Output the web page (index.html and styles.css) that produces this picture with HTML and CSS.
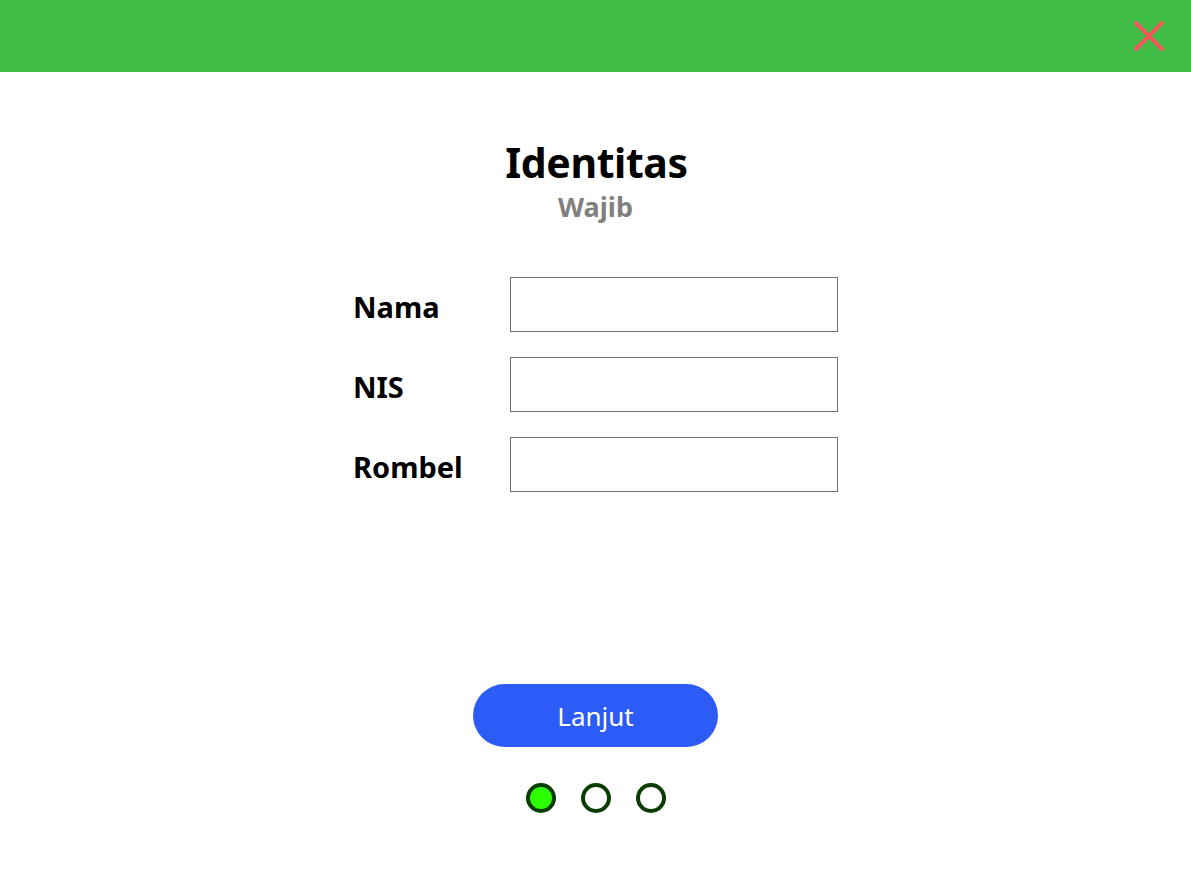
FILE: index.html
```html
<!DOCTYPE html>
<html lang="id">
<head>
<meta charset="utf-8">
<title>Identitas</title>
<link rel="stylesheet" href="styles.css">
</head>
<body>
<header class="topbar">
  <button class="close" aria-label="Tutup">
    <svg width="32" height="32" viewBox="0 0 32 32"><path d="M3 3 L29 29 M29 3 L3 29" stroke="#f2585a" stroke-width="4" stroke-linecap="round"/></svg>
  </button>
</header>
<main class="content">
  <div class="heading">
    <h1 class="title">Identitas</h1>
    <p class="subtitle">Wajib</p>
  </div>
  <form class="form">
    <label class="label" for="nama">Nama</label>
    <input class="field" id="nama" type="text">
    <label class="label" for="nis">NIS</label>
    <input class="field" id="nis" type="text">
    <label class="label" for="rombel">Rombel</label>
    <input class="field" id="rombel" type="text">
  </form>
  <button class="next">Lanjut</button>
  <div class="dots">
    <span class="dot active"></span>
    <span class="dot"></span>
    <span class="dot"></span>
  </div>
</main>
</body>
</html>
```
FILE: styles.css
```css
* { box-sizing: border-box; }
html, body { margin: 0; padding: 0; background: #fff; }
body { font-family: "Noto Sans", "Open Sans", sans-serif; color: #000; }

.topbar {
  height: 72px;
  background: #41bd45;
  display: flex;
  justify-content: flex-end;
  align-items: center;
  padding-right: 26px;
}
.close {
  border: 0;
  background: transparent;
  padding: 0;
  width: 32px;
  height: 32px;
  display: flex;
  cursor: pointer;
}

.content {
  display: flex;
  flex-direction: column;
  align-items: center;
}
.heading { display: flex; flex-direction: column; align-items: center; margin-top: 64px; }
.title { margin: 0 0 0 2px; font-size: 41px; font-weight: 700; line-height: 52px; letter-spacing: -0.4px; }
.subtitle { margin: 2px 0 0; font-size: 27px; font-weight: 700; line-height: 34px; color: #808080; }

.form {
  margin-top: 53px;
  display: grid;
  grid-template-columns: 157px 328px;
  row-gap: 25px;
  align-items: center;
}
.label { font-size: 29px; font-weight: 700; line-height: 40px; padding-top: 4px; }
.field {
  height: 55px;
  border: 1px solid #707070;
  background: #fff;
  font: inherit;
  font-size: 20px;
  padding: 0 10px;
}

.next {
  margin-top: 192px;
  width: 245px;
  height: 63px;
  border: 0;
  border-radius: 32px;
  background: #2d5bf6;
  color: #fff;
  font-family: inherit;
  font-size: 26px;
  font-weight: 400;
  cursor: pointer;
}
.dots { display: flex; gap: 25px; margin-top: 36px; }
.dot {
  width: 30px;
  height: 30px;
  border-radius: 50%;
  border: 4px solid #0a3d00;
  background: #fff;
}
.dot.active { background: #2bff00; }
```
